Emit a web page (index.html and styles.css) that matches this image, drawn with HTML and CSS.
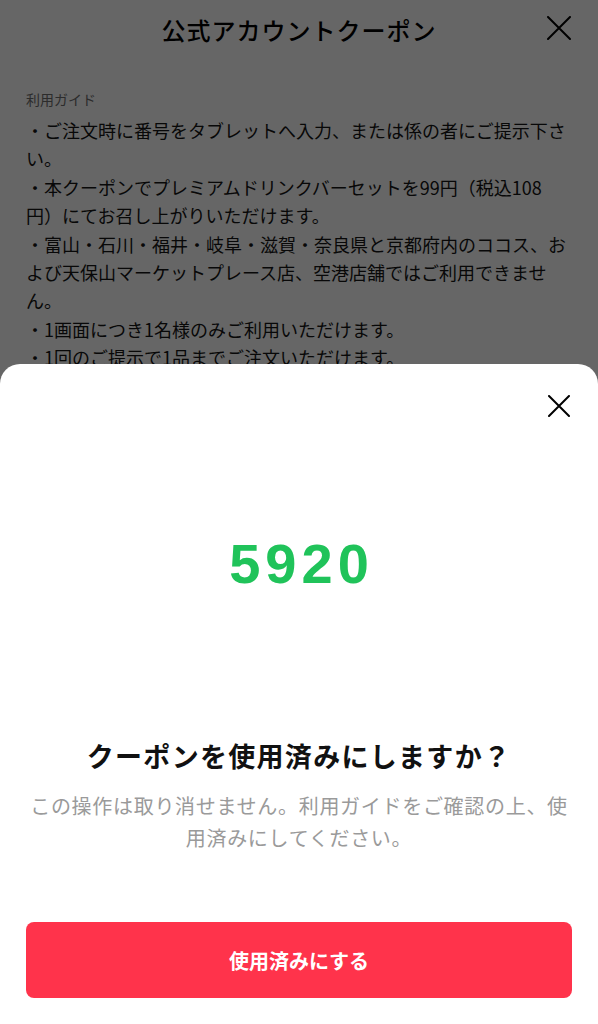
FILE: index.html
```html
<!DOCTYPE html>
<html lang="ja">
<head>
<meta charset="utf-8">
<title>公式アカウントクーポン</title>
<link rel="stylesheet" href="styles.css">
</head>
<body>
<div class="page">
  <header class="topbar">
    <span></span>
    <h1 class="topbar-title">公式アカウントクーポン</h1>
    <button class="icon-btn topbar-close" aria-label="閉じる">
      <svg viewBox="0 0 24 24" width="24" height="24"><path d="M1 1L23 23M23 1L1 23" stroke="#000" stroke-width="2" stroke-linecap="round" fill="none"/></svg>
    </button>
  </header>
  <section class="guide">
    <h2 class="guide-label">利用ガイド</h2>
    <p>・ご注文時に番号をタブレットへ入力、または係の者にご提示下さい。</p>
    <p>・本クーポンでプレミアムドリンクバーセットを99円（税込108円）にてお召し上がりいただけます。</p>
    <p>・富山・石川・福井・岐阜・滋賀・奈良県と京都府内のココス、および天保山マーケットプレース店、空港店舗ではご利用できません。</p>
    <p>・1画面につき1名様のみご利用いただけます。</p>
    <p>・1回のご提示で1品までご注文いただけます。</p>
    <p>・他のクーポン・割引券との併用はできません。</p>
  </section>
</div>

<div class="backdrop"></div>

<div class="sheet" role="dialog">
  <div class="sheet-head">
    <button class="icon-btn sheet-close" aria-label="閉じる">
      <svg viewBox="0 0 22 22" width="22" height="22"><path d="M1 1L21 21M21 1L1 21" stroke="#000" stroke-width="2" stroke-linecap="round" fill="none"/></svg>
    </button>
  </div>
  <div class="code">5920</div>
  <h2 class="sheet-title">クーポンを使用済みにしますか？</h2>
  <p class="sheet-desc">この操作は取り消せません。利用ガイドをご確認の上、使用済みにしてください。</p>
  <button class="primary-btn">使用済みにする</button>
</div>
</body>
</html>
```

FILE: styles.css
```css
* { box-sizing: border-box; }

html, body {
  margin: 0;
  padding: 0;
  height: 100%;
  overflow: hidden;
}

body {
  background: #fff;
  color: #000;
  font-family: "Noto Sans CJK JP", "Noto Sans", sans-serif;
  text-spacing-trim: space-all;
}

.page {
  height: 1024px;
  overflow: hidden;
}

.icon-btn {
  border: 0;
  background: none;
  padding: 0;
  margin: 0;
  display: flex;
  align-items: center;
  justify-content: center;
  cursor: pointer;
}

.topbar {
  display: grid;
  grid-template-columns: 1fr auto 1fr;
  align-items: center;
  height: 56px;
  padding: 0 27px;
}

.topbar-title {
  margin: 0;
  font-size: 24px;
  font-weight: 500;
  letter-spacing: 1px;
  line-height: 32px;
  padding-top: 4px;
}

.topbar-close {
  justify-self: end;
  width: 24px;
  height: 24px;
}

.guide {
  padding: 33px 30px 0 26px;
}

.guide-label {
  margin: 0 0 7px;
  font-size: 14px;
  font-weight: 400;
  line-height: 20px;
  color: #6e6e6e;
}

.guide p {
  margin: 0;
  font-size: 18px;
  line-height: 28.4px;
  color: #141414;
}

.backdrop {
  position: fixed;
  inset: 0;
  background: rgba(0, 0, 0, 0.6);
}

.sheet {
  position: fixed;
  left: 0;
  right: 0;
  top: 364px;
  bottom: 0;
  background: #fff;
  border-radius: 20px 20px 0 0;
  display: flex;
  flex-direction: column;
  padding: 0 26px 26px;
}

.sheet-head {
  display: flex;
  justify-content: flex-end;
  padding-top: 31px;
  padding-right: 2px;
}

.sheet-close {
  width: 22px;
  height: 22px;
}

.code {
  margin-top: 114px;
  text-align: center;
  font-family: "Liberation Sans", Arial, sans-serif;
  font-weight: 700;
  font-size: 56px;
  letter-spacing: 5px;
  text-indent: 5px;
  line-height: 66px;
  color: #20c35a;
}

.sheet-title {
  margin: 141px 0 0;
  text-align: center;
  font-size: 27px;
  font-weight: 700;
  letter-spacing: 1.3px;
  line-height: 36px;
  color: #111;
}

.sheet-desc {
  margin: 16px 0 0;
  text-align: center;
  font-size: 20px;
  letter-spacing: 0.7px;
  line-height: 32px;
  color: #9a9a9a;
}

.primary-btn {
  margin-top: auto;
  height: 76px;
  width: 100%;
  border: 0;
  border-radius: 8px;
  background: #ff334b;
  color: #fff;
  font-family: "Noto Sans CJK JP", "Noto Sans", sans-serif;
  font-size: 20px;
  font-weight: 700;
  cursor: pointer;
}
```
